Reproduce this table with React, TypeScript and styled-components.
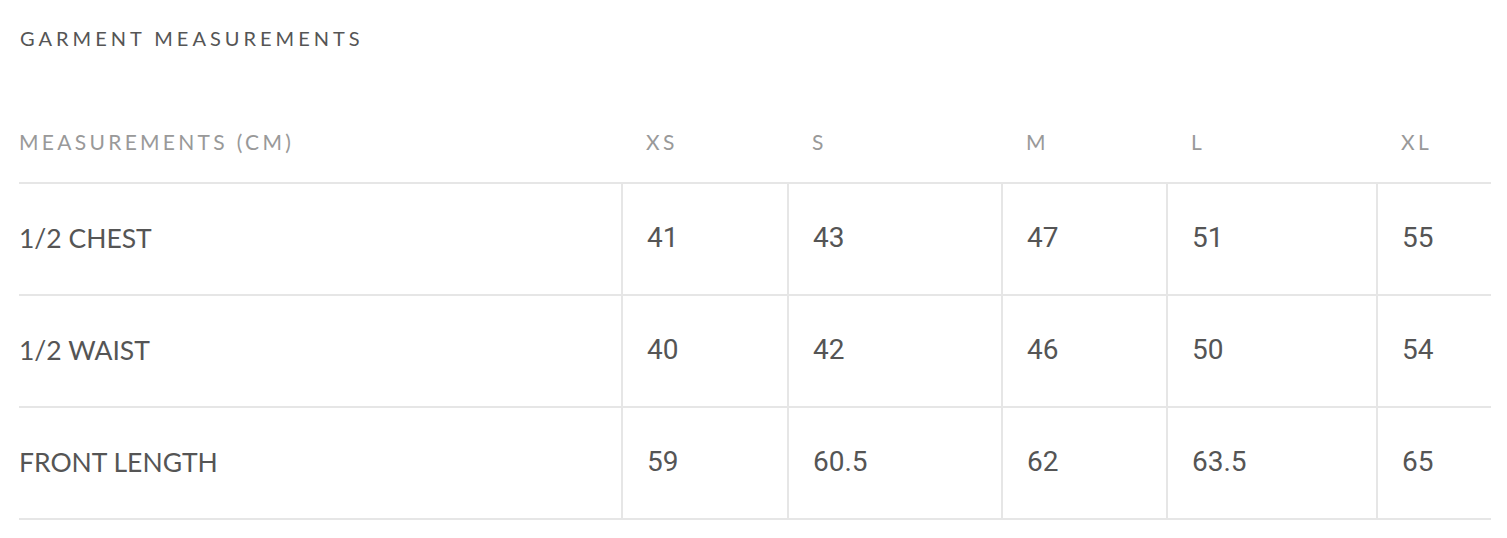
import React from "react";
import styled, { createGlobalStyle } from "styled-components";

const Global = createGlobalStyle`
  html, body { margin: 0; padding: 0; background: #fff; }
  body { font-family: "Lato", "Noto Sans", sans-serif; color: #555; }
`;

const Page = styled.div`
  padding: 24px 16px 0 19px;
`;

const Title = styled.h2`
  margin: 0 0 0 1px;
  font-family: "Lato", sans-serif;
  font-weight: 400;
  font-size: 20px;
  line-height: 28px;
  letter-spacing: 4px;
  color: #555;
`;

const Table = styled.table`
  margin-top: 50px;
  width: 1472px;
  border-collapse: collapse;
  table-layout: fixed;
`;

const Col = styled.col<{ $w: number }>`
  width: ${(p) => p.$w}px;
`;

const HeadCell = styled.th<{ $first?: boolean }>`
  height: 78px;
  padding: 0 0 2px ${(p) => (p.$first ? 0 : 24)}px;
  text-align: left;
  font-family: "Lato", sans-serif;
  font-weight: 400;
  font-size: 21px;
  letter-spacing: 3.3px;
  color: #999;
  border-bottom: 2px solid #e6e6e6;
  vertical-align: middle;
`;

const Row = styled.tr`
  height: 112px;
  border-bottom: 2px solid #e6e6e6;
`;

const Label = styled.td`
  padding: 0 0 3px 0;
  font-family: "Lato", sans-serif;
  font-size: 26.5px;
  color: #555;
  vertical-align: middle;
`;

const Value = styled.td`
  padding: 0 0 3px 24px;
  font-family: "Roboto", sans-serif;
  font-size: 28px;
  color: #555;
  border-left: 2px solid #e6e6e6;
  vertical-align: middle;
`;

const sizes = ["XS", "S", "M", "L", "XL"];
const widths = [603, 166, 214, 165, 210, 114];
const rows: [string, string[]][] = [
  ["1/2 CHEST", ["41", "43", "47", "51", "55"]],
  ["1/2 WAIST", ["40", "42", "46", "50", "54"]],
  ["FRONT LENGTH", ["59", "60.5", "62", "63.5", "65"]],
];

export default function App() {
  return (
    <>
      <Global />
      <Page>
        <Title>GARMENT MEASUREMENTS</Title>
        <Table>
          <colgroup>
            {widths.map((w, i) => (
              <Col key={i} $w={w} />
            ))}
          </colgroup>
          <thead>
            <tr>
              <HeadCell $first>MEASUREMENTS (CM)</HeadCell>
              {sizes.map((s) => (
                <HeadCell key={s}>{s}</HeadCell>
              ))}
            </tr>
          </thead>
          <tbody>
            {rows.map(([label, vals]) => (
              <Row key={label}>
                <Label>{label}</Label>
                {vals.map((v, i) => (
                  <Value key={i}>{v}</Value>
                ))}
              </Row>
            ))}
          </tbody>
        </Table>
      </Page>
    </>
  );
}
